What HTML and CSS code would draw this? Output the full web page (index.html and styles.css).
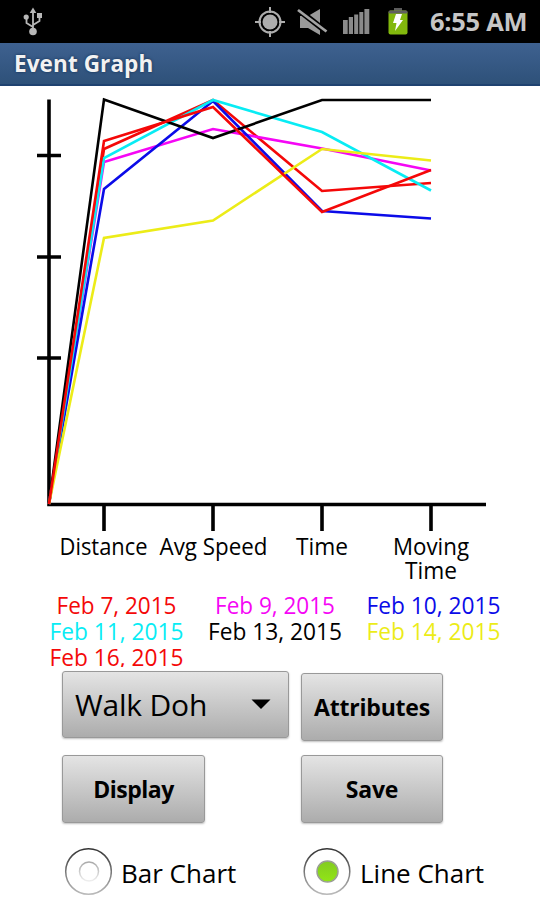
FILE: index.html
```html
<!DOCTYPE html>
<html lang="en">
<head>
  <meta charset="UTF-8">
  <meta name="viewport" content="width=device-width, initial-scale=1.0">
  <title>Event Graph</title>
  <link rel="stylesheet" href="styles.css">
</head>
<body>
  <!-- Status bar -->
  <div class="status-bar">
    <svg class="usb-icon" width="20" height="30" viewBox="0 0 20 30">
      <path d="M10 4V25M10 20L3.500 16V10M10 18L16.500 14V9" fill="none" stroke="#b8b8b8" stroke-width="1.800"/>
      <path d="M10 0.500L13.300 6H6.700Z" fill="#b8b8b8"/>
      <circle cx="3.200" cy="10" r="2.600" fill="#b8b8b8"/>
      <rect x="14" y="6" width="5" height="5" fill="#b8b8b8"/>
      <circle cx="10" cy="24.500" r="3.800" fill="#b8b8b8"/>
    </svg>
    <div class="status-right">
      <svg class="gps-icon" width="30" height="30" viewBox="0 0 30 30">
        <circle cx="15" cy="15" r="10.500" fill="none" stroke="#adadad" stroke-width="2"/>
        <circle cx="15" cy="15" r="7.500" fill="#adadad"/>
        <path d="M15 0V6M15 24V30M0 15H6M24 15H30" stroke="#adadad" stroke-width="2"/>
      </svg>
      <svg class="mute-icon" width="31" height="28" viewBox="0 0 31 28">
        <path d="M3 8H11L23 1V27L11 20H3Z" fill="#9a9a9a"/>
        <path d="M-1 0L31 25" stroke="#000" stroke-width="6"/>
        <path d="M1 2L29.500 23.500" stroke="#a4a4a4" stroke-width="2.800"/>
      </svg>
      <svg class="signal-icon" width="27" height="26" viewBox="0 0 27 26">
        <path d="M0 11H4.700V25H0ZM5.800 8H10V25H5.800ZM11.200 5.500H15.200V25H11.200ZM16.300 3H20.300V25H16.300ZM21.400 0H26.300V25H21.400Z" fill="#8a8a8a"/>
      </svg>
      <svg class="battery-icon" width="20" height="27" viewBox="0 0 20 27">
        <rect x="6" y="0" width="8" height="4" fill="#5c5c5c"/>
        <rect x="0.500" y="2.500" width="19" height="24" rx="2" fill="#82b80d"/>
        <rect x="0.500" y="2.500" width="19" height="3" rx="1.500" fill="#606060"/>
        <path d="M8 6H14L12 12H15L7 23L8.500 15H5Z" fill="#fff"/>
      </svg>
      <span class="clock">6:55 AM</span>
    </div>
  </div>

  <h1 class="title-bar">Event Graph</h1>

  <!-- Line chart with legend -->
  <svg class="chart" width="540" height="581" viewBox="0 86 540 581">
    <g class="axis">
      <path d="M49 99.500V504.500H486"/>
      <path d="M37 155.500H61M37 257H61M37 358H61"/>
      <path d="M104 504V531M213 504V531M322 504V531M431 504V531"/>
    </g>
    <g class="series">
      <polyline class="red" points="49,504 104,149 213,100 322,191 431,183"/>
      <polyline class="magenta" points="49,504 104,162 213,129 322,148.500 431,170.500"/>
      <polyline class="blue" points="49,504 104,189 213,101 322,211 431,218.500"/>
      <polyline class="cyan" points="49,504 104,158 213,100 322,132 431,190.500"/>
      <polyline class="black" points="49,504 104,99.500 213,138 322,100 431,100"/>
      <polyline class="yellow" points="49,504 104,238 213,220.500 322,149 431,160.500"/>
      <polyline class="red" points="49,504 104,141 213,107 322,212 431,170"/>
    </g>
    <g class="labels">
      <text x="103.500" y="554.500" textLength="88" lengthAdjust="spacingAndGlyphs">Distance</text>
      <text x="213.500" y="554.500" textLength="108" lengthAdjust="spacingAndGlyphs">Avg Speed</text>
      <text x="322" y="554.500" textLength="52" lengthAdjust="spacingAndGlyphs">Time</text>
      <text x="431" y="554.500" textLength="76" lengthAdjust="spacingAndGlyphs">Moving</text>
      <text x="431" y="578.500" textLength="52" lengthAdjust="spacingAndGlyphs">Time</text>
    </g>
    <g class="legend">
      <text class="red" x="116.500" y="614" textLength="120" lengthAdjust="spacingAndGlyphs">Feb 7, 2015</text>
      <text class="magenta" x="275" y="614" textLength="120" lengthAdjust="spacingAndGlyphs">Feb 9, 2015</text>
      <text class="blue" x="433.500" y="614" textLength="134" lengthAdjust="spacingAndGlyphs">Feb 10, 2015</text>
      <text class="cyan" x="116.500" y="640" textLength="134" lengthAdjust="spacingAndGlyphs">Feb 11, 2015</text>
      <text class="black" x="275" y="640" textLength="134" lengthAdjust="spacingAndGlyphs">Feb 13, 2015</text>
      <text class="yellow" x="433.500" y="640" textLength="134" lengthAdjust="spacingAndGlyphs">Feb 14, 2015</text>
      <text class="red" x="116.500" y="666" textLength="134" lengthAdjust="spacingAndGlyphs">Feb 16, 2015</text>
    </g>
  </svg>

  <!-- Controls -->
  <div class="controls">
    <button class="spinner">
      <span>Walk Doh</span>
      <svg width="20" height="11" viewBox="0 0 20 11"><path d="M0.500 0.500H19.500L10 10Z"/></svg>
    </button>
    <button class="btn attributes">Attributes</button>
    <button class="btn display">Display</button>
    <button class="btn save">Save</button>
    <label class="radio">
      <svg width="48" height="50" viewBox="0 0 48 50">
        <defs>
          <linearGradient id="ring" x1="0" y1="0" x2="0" y2="1">
            <stop offset="0" stop-color="#333"/>
            <stop offset="1" stop-color="#bbb"/>
          </linearGradient>
          <linearGradient id="dot" x1="0" y1="0" x2="0" y2="1">
            <stop offset="0" stop-color="#aaa"/>
            <stop offset="1" stop-color="#eee"/>
          </linearGradient>
        </defs>
        <circle cx="24.500" cy="25.500" r="22.800" fill="#fff" stroke="url(#ring)" stroke-width="1.500"/>
        <circle cx="25" cy="25.500" r="9.500" fill="#fff" stroke="url(#dot)" stroke-width="1.500"/>
      </svg>
      <span>Bar Chart</span>
    </label>
    <label class="radio">
      <svg width="48" height="50" viewBox="0 0 48 50">
        <defs>
          <linearGradient id="green" x1="0" y1="0" x2="0" y2="1">
            <stop offset="0" stop-color="#82cb20"/>
            <stop offset="1" stop-color="#92e516"/>
          </linearGradient>
        </defs>
        <circle cx="24" cy="25.500" r="22.800" fill="#fff" stroke="url(#ring)" stroke-width="1.500"/>
        <circle cx="24.500" cy="25.500" r="10.500" fill="url(#green)" stroke="#9a9f94" stroke-width="1.500"/>
      </svg>
      <span>Line Chart</span>
    </label>
  </div>
</body>
</html>
```
FILE: styles.css
```css
* {
  margin: 0;
  padding: 0;
  box-sizing: border-box;
  font-family: "Open Sans", "Noto Sans", sans-serif;
}

body {
  width: 540px;
  height: 900px;
  overflow: hidden;
  background-color: #fff;
  color: #000;
}

/* Status bar */
.status-bar {
  display: flex;
  justify-content: space-between;
  align-items: center;
  height: 43px;
  padding: 0 10px 0 23px;
  background-color: #000;
}

.status-right {
  display: flex;
  align-items: center;
}

.mute-icon {
  margin-left: 12px;
}

.signal-icon {
  margin-left: 15px;
}

.battery-icon {
  margin-left: 18px;
}

.clock {
  width: 100px;
  margin-left: 22px;
  color: #c6c6c6;
  font-size: 25.5px;
  font-weight: 700;
  letter-spacing: -0.3px;
  line-height: 45px;
  white-space: nowrap;
}

/* Title bar */
.title-bar {
  height: 43px;
  padding-left: 14px;
  background: linear-gradient(#3e6190, #2e5179);
  border-bottom: 2px solid #1f4270;
  color: #f2f2f2;
  font-size: 22.5px;
  font-weight: 700;
  letter-spacing: 0.1px;
  line-height: 41px;
  text-shadow: 0 0 3px #122d50;
}

/* Chart */
.chart {
  display: block;
  overflow: hidden;
}

.axis path {
  fill: none;
  stroke: #000;
  stroke-width: 3.6;
}

.series polyline {
  fill: none;
  stroke: currentColor;
  stroke-width: 2.6;
}

.labels text,
.legend text {
  fill: currentColor;
  font-size: 23.5px;
  text-anchor: middle;
}

.red { color: #f40808; }
.magenta { color: #f506f5; }
.blue { color: #0b0be8; }
.cyan { color: #08ecf4; }
.black { color: #000; }
.yellow { color: #ecec18; }

/* Controls */
.controls {
  display: grid;
  grid-template-columns: 239px 1fr;
  grid-template-rows: 88px 80px 1fr;
  padding: 4px 0 0 62px;
}

button {
  border: 1px solid #999;
  border-radius: 3px;
  background: linear-gradient(#e4e4e4, #acacac);
  box-shadow: 0 1px 2px rgba(0, 0, 0, 0.25);
  color: #000;
}

.spinner {
  display: flex;
  justify-content: space-between;
  align-items: center;
  width: 227px;
  height: 67px;
  padding: 0 17px 0 12px;
  font-size: 30px;
  letter-spacing: -0.2px;
}

.btn {
  width: 142px;
  height: 68px;
  font-size: 23px;
  font-weight: 700;
  letter-spacing: -0.2px;
}

.attributes {
  margin-top: 2px;
}

.display,
.save {
  margin-top: -4px;
}

.display {
  width: 143px;
  letter-spacing: -0.5px;
}

.radio {
  display: flex;
  align-items: center;
  height: 50px;
  margin: 7px 0 0 2px;
  font-size: 26px;
}

.radio span {
  margin: 4px 0 0 9px;
}
```
